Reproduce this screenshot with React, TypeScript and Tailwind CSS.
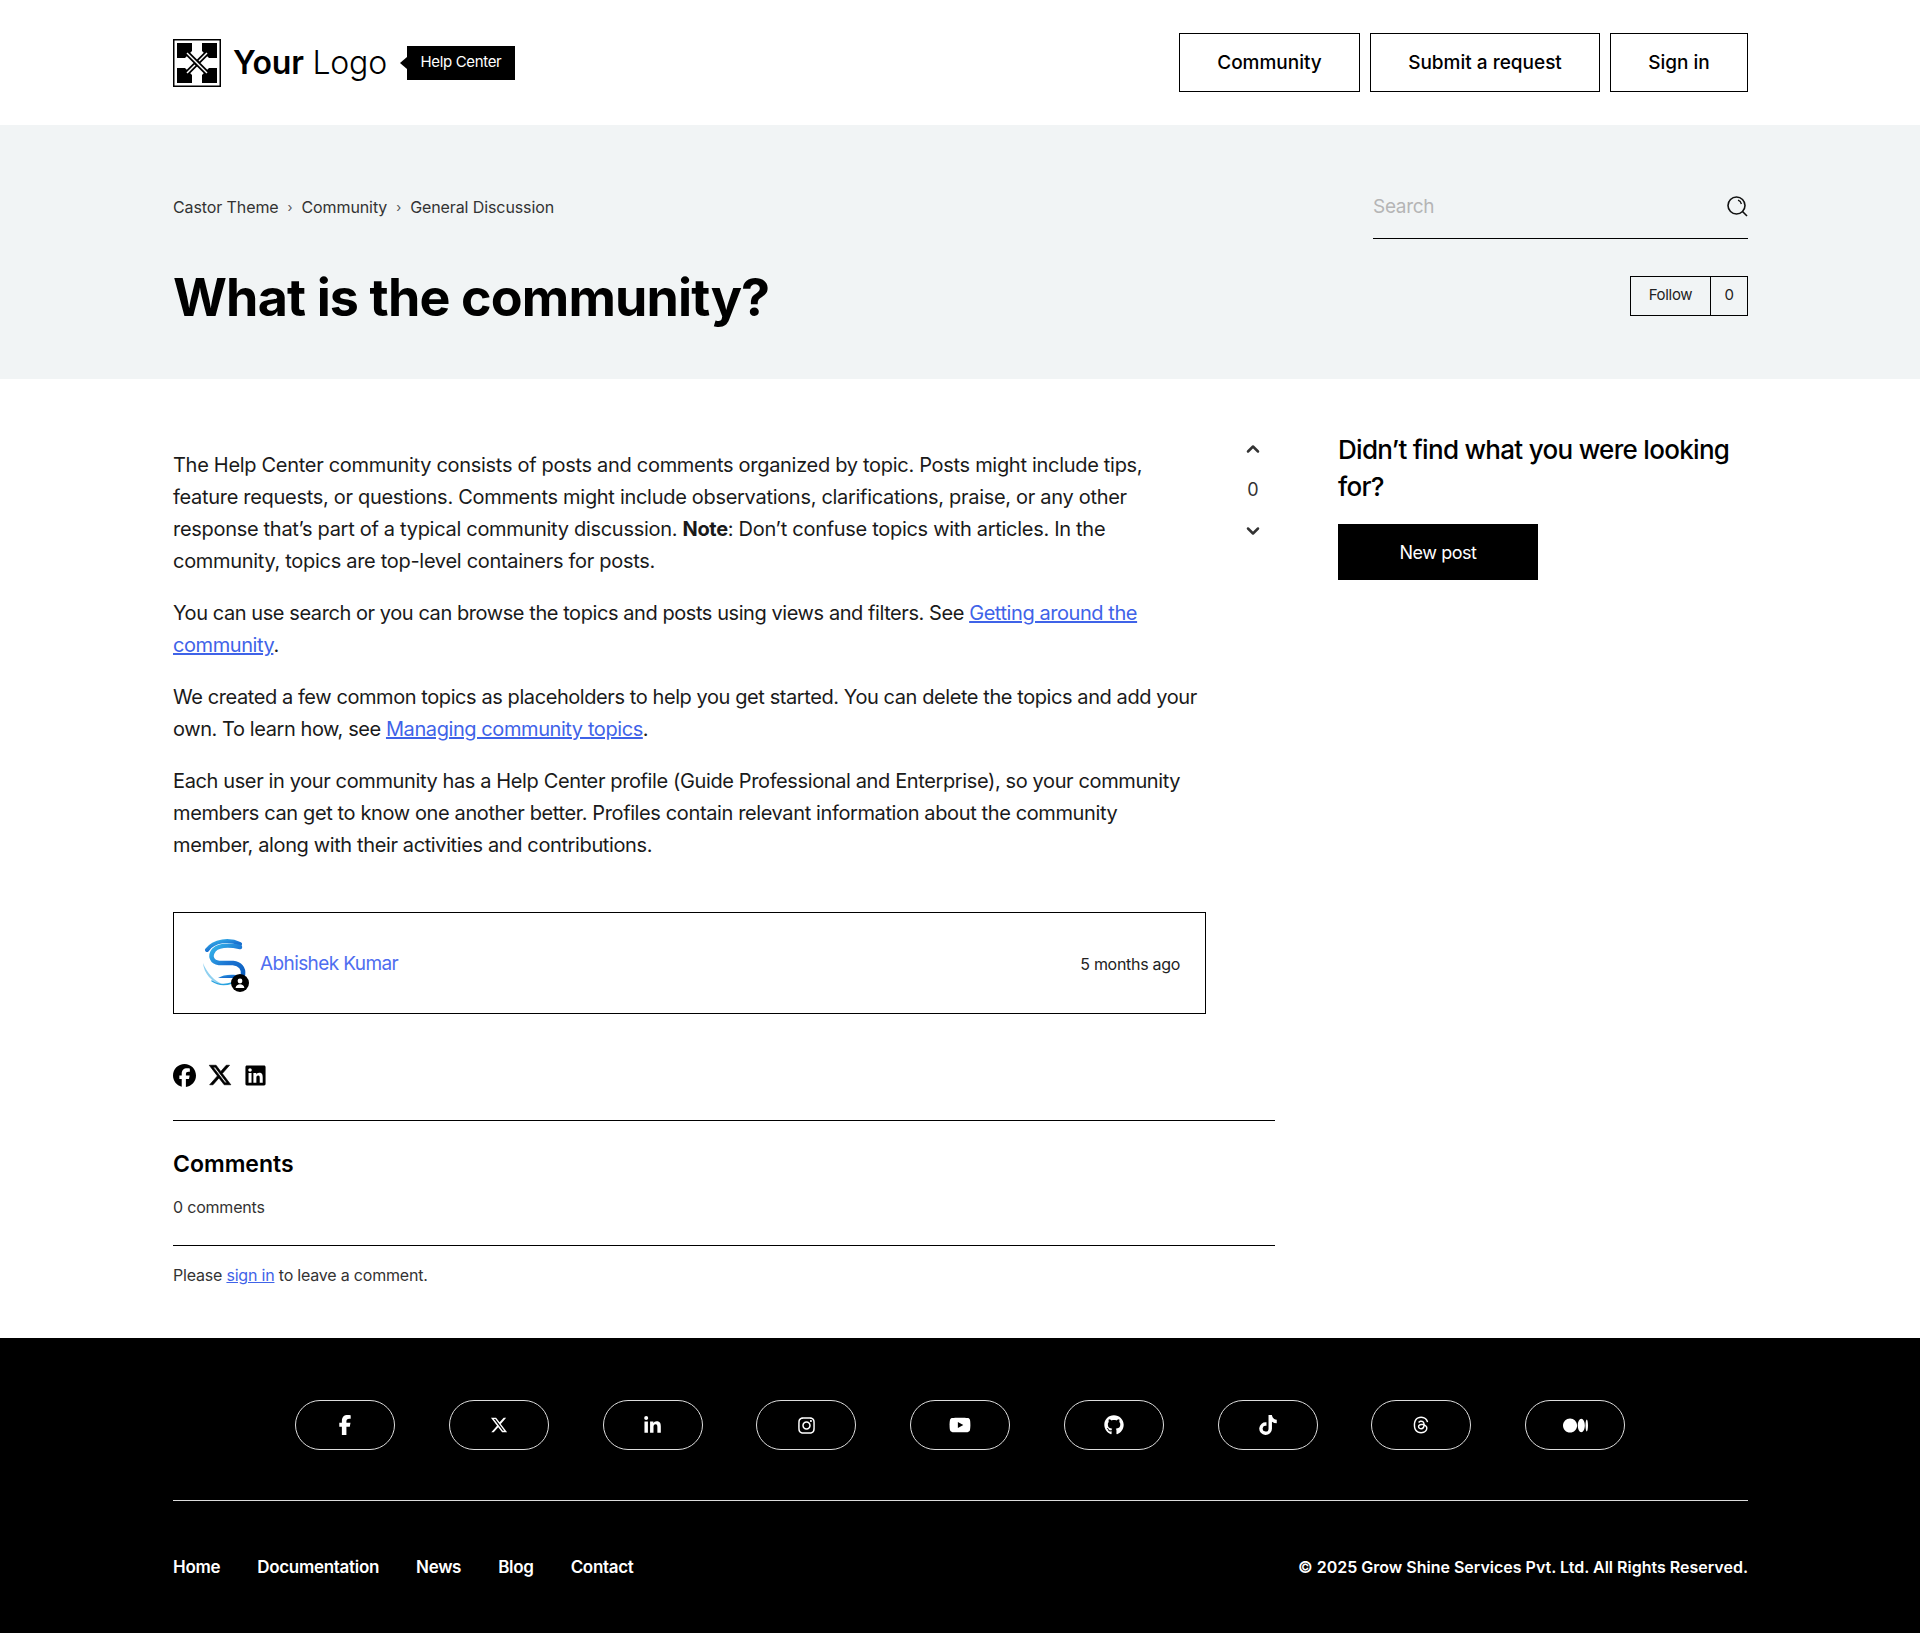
import { ChevronDown, ChevronUp } from "lucide-react";
import {
  FaFacebook,
  FaFacebookF,
  FaGithub,
  FaInstagram,
  FaLinkedin,
  FaLinkedinIn,
  FaMedium,
  FaThreads,
  FaTiktok,
  FaXTwitter,
  FaYoutube,
} from "react-icons/fa6";

const FOOTER_ICONS = [
  { Icon: FaFacebookF, size: 20 },
  { Icon: FaXTwitter, size: 18 },
  { Icon: FaLinkedinIn, size: 19 },
  { Icon: FaInstagram, size: 19 },
  { Icon: FaYoutube, size: 22 },
  { Icon: FaGithub, size: 20 },
  { Icon: FaTiktok, size: 20 },
  { Icon: FaThreads, size: 18 },
  { Icon: FaMedium, size: 25 },
];

const FOOTER_LINKS = ["Home", "Documentation", "News", "Blog", "Contact"];

function LogoMark() {
  return (
    <svg width="48" height="48" viewBox="0 0 48 48" className="shrink-0">
      <rect x="0.75" y="0.75" width="46.500" height="46.500" fill="#fff" stroke="#000" strokeWidth="1.500" />
      <path d="M4 4H19V12L12 19H4Z" fill="#000" />
      <path d="M44 4H29V12L36 19H44Z" fill="#000" />
      <path d="M4 44H19V36L12 29H4Z" fill="#000" />
      <path d="M44 44H29V36L36 29H44Z" fill="#000" />
      <path d="M15 15L33 33M33 15L15 33" stroke="#000" strokeWidth="5" fill="none" />
      <path d="M14 14L34 34" stroke="#fff" strokeWidth="1.500" fill="none" />
      <path d="M34 14L26 22M22 26L14 34" stroke="#fff" strokeWidth="1.500" fill="none" />
    </svg>
  );
}

function SearchGlyph() {
  return (
    <svg width="22" height="22" viewBox="0 0 22 22" fill="none" stroke="#111" strokeWidth="1.600">
      <circle cx="10.500" cy="10.500" r="8.500" />
      <path d="M16.500 16.500L21 21" />
      <path d="M12 5.200c1.800.6 3 2 3.400 3.800" strokeWidth="1.300" />
    </svg>
  );
}

function Avatar() {
  return (
    <div className="relative h-[50px] w-[50px] shrink-0">
      <svg width="50" height="50" viewBox="0 0 50 50" fill="none">
        <defs>
          <linearGradient id="swoosh" x1="0" y1="0" x2="1" y2="1">
            <stop offset="0" stopColor="#35b6ea" />
            <stop offset="0.55" stopColor="#1c74d2" />
            <stop offset="1" stopColor="#0b5fc0" />
          </linearGradient>
        </defs>
        <path d="M40 6C30 1 14 2 7 12" stroke="url(#swoosh)" strokeWidth="4" strokeLinecap="round" />
        <path d="M40 9C30 7 19 7 14 12C9 18 12 24 19 25H33C40 26 44 30 43 37" stroke="url(#swoosh)" strokeWidth="4.500" strokeLinecap="round" />
        <path d="M3 25C4 35 11 45 24 47C14 43 7 35 3 25Z" fill="#8fd0f0" />
        <path d="M18 40C22 37 30 36 36 37V40H18Z" fill="url(#swoosh)" />
        <path d="M12 43C18 47 26 47 32 45" stroke="#2aa3e0" strokeWidth="1.500" strokeLinecap="round" />
      </svg>
      <div className="absolute bottom-[-4px] right-[1px] flex h-[18px] w-[18px] items-center justify-center rounded-full bg-black">
        <svg width="12" height="12" viewBox="0 0 12 12" fill="#fff">
          <circle cx="6" cy="4" r="2.400" />
          <path d="M1.600 11c.4-2.600 2.200-3.800 4.400-3.800s4 1.200 4.400 3.800z" />
        </svg>
      </div>
    </div>
  );
}

export default function App() {
  return (
    <div className="flex min-h-[1633px] flex-col bg-white font-['Inter',sans-serif] text-black">
      <header className="h-[125px]">
        <div className="ml-[173px] flex h-full w-[1575px] items-center justify-between">
          <div className="flex items-center">
            <LogoMark />
            <div className="ml-[12px] text-[32px] leading-none tracking-[-0.2px]">
              <span className="font-semibold">Your</span> <span className="font-light">Logo</span>
            </div>
            <div className="relative ml-[20px] flex h-[34px] w-[108px] items-center justify-center bg-black text-[15px] tracking-[-0.35px] text-white">
              <span className="absolute left-[-7px] top-[11px] h-0 w-0 border-y-[6px] border-r-[7px] border-y-transparent border-r-black" />
              Help Center
            </div>
          </div>
          <nav className="flex gap-[10px] text-[19px] font-medium">
            <a className="flex h-[59px] w-[181px] items-center justify-center border border-black pt-[2px]">Community</a>
            <a className="flex h-[59px] w-[230px] items-center justify-center border border-black pt-[2px]">Submit a request</a>
            <a className="flex h-[59px] w-[138px] items-center justify-center border border-black pt-[2px]">Sign in</a>
          </nav>
        </div>
      </header>

      <section className="h-[254px] bg-[#f1f4f5]">
        <div className="ml-[173px] w-[1575px]">
          <div className="flex items-start justify-between pt-[57px]">
            <ol className="flex items-center pt-[14px] text-[16px] leading-[22px] tracking-[-0.1px] text-[#333]">
              <li>Castor Theme</li>
              <li className="mx-[9px] text-[13px] text-[#555]">›</li>
              <li>Community</li>
              <li className="mx-[9px] text-[13px] text-[#555]">›</li>
              <li>General Discussion</li>
            </ol>
            <div className="flex h-[57px] w-[375px] items-start justify-between border-b border-black pt-[13px]">
              <span className="text-[19px] leading-[24px] tracking-[-0.3px] text-[#b5b5b5]">Search</span>
              <SearchGlyph />
            </div>
          </div>
          <div className="mt-[26px] flex items-center justify-between">
            <h1 className="text-[52px] font-bold leading-[66px] tracking-[-0.85px]">What is the community?</h1>
            <div className="mb-[5px] flex h-[40px] w-[118px] border border-black text-[15px] tracking-[-0.3px] text-[#222]">
              <span className="flex flex-1 items-center justify-center border-r border-black">Follow</span>
              <span className="flex w-[36px] items-center justify-center">0</span>
            </div>
          </div>
        </div>
      </section>

      <main className="ml-[173px] flex w-[1575px] justify-between pt-[52px]">
        <div className="w-[1102px]">
          <div className="flex justify-between">
            <article className="w-[1033px] pt-[18px] text-[20px] leading-[32px] text-[#1a1a1a]">
              <p className="tracking-[-0.3px]">
                The Help Center community consists of posts and comments organized by topic. Posts might include tips,
                <br />
                feature requests, or questions. Comments might include observations, clarifications, praise, or any other
                <br />
                response that’s part of a typical community discussion. <strong>Note</strong>: Don’t confuse topics with
                articles. In the
                <br />
                community, topics are top-level containers for posts.
              </p>
              <p className="mt-[20px] tracking-[-0.43px]">
                You can use search or you can browse the topics and posts using views and filters. See{" "}
                <a className="text-[#3f63e8] underline">Getting around the</a>
                <br />
                <a className="text-[#3f63e8] underline">community</a>.
              </p>
              <p className="mt-[20px] tracking-[-0.42px]">
                We created a few common topics as placeholders to help you get started. You can delete the topics and add
                your
                <br />
                own. To learn how, see <a className="text-[#3f63e8] underline">Managing community topics</a>.
              </p>
              <p className="mt-[20px] tracking-[-0.38px]">
                Each user in your community has a Help Center profile (Guide Professional and Enterprise), so your community
                <br />
                members can get to know one another better. Profiles contain relevant information about the community
                <br />
                member, along with their activities and contributions.
              </p>
            </article>
            <div className="mr-[7px] flex h-[110px] w-[30px] flex-col items-center justify-between pt-[8px] text-[#333]">
              <ChevronUp size={20} strokeWidth={3} />
              <span className="text-[18px] leading-none">0</span>
              <ChevronDown size={20} strokeWidth={3} />
            </div>
          </div>

          <div className="mt-[51px] flex h-[102px] w-[1033px] items-center justify-between border border-black pl-[26px] pr-[25px]">
            <div className="flex items-center gap-[10px]">
              <Avatar />
              <span className="pt-[2px] text-[19px] tracking-[-0.6px] text-[#4f6ef0]">Abhishek Kumar</span>
            </div>
            <span className="pt-[2px] text-[16px] tracking-[-0.3px] text-[#222]">5 months ago</span>
          </div>

          <div className="mt-[49px] flex items-center gap-[12px]">
            <FaFacebook size={23} />
            <FaXTwitter size={24} stroke="currentColor" strokeWidth={14} />
            <FaLinkedin size={23} />
          </div>

          <div className="mt-[33px] border-t border-black pt-[27px]">
            <h2 className="text-[23px] font-semibold leading-[32px]">Comments</h2>
            <p className="mt-[15px] text-[16px] leading-[24px] tracking-[-0.2px] text-[#333]">0 comments</p>
          </div>
          <div className="mt-[26px] border-t border-black pt-[17px] text-[16px] leading-[24px] tracking-[-0.2px] text-[#333]">
            Please <a className="text-[#3f63e8] underline">sign in</a> to leave a comment.
          </div>
        </div>

        <aside className="w-[410px]">
          <h3 className="text-[26px] font-medium leading-[37px] tracking-[-0.7px]">
            Didn’t find what you were looking for?
          </h3>
          <button className="mt-[19px] flex h-[56px] w-[200px] items-center justify-center bg-black text-[18px] tracking-[-0.45px] text-white">
            New post
          </button>
        </aside>
      </main>

      <footer className="mt-auto h-[295px] bg-black text-white">
        <div className="ml-[173px] w-[1575px]">
          <div className="flex justify-between pl-[122px] pr-[123px] pt-[62px]">
            {FOOTER_ICONS.map(({ Icon, size }, i) => (
              <a key={i} className="flex h-[50px] w-[100px] items-center justify-center rounded-[25px] border border-[#ddd]">
                <Icon size={size} />
              </a>
            ))}
          </div>
          <div className="mt-[50px] flex items-center justify-between border-t border-[#ddd] pt-[54px] font-semibold leading-[24px]">
            <div className="flex gap-[37px] text-[17px] tracking-[-0.3px]">
              {FOOTER_LINKS.map((link) => (
                <a key={link}>{link}</a>
              ))}
            </div>
            <span className="text-[16px]">© 2025 Grow Shine Services Pvt. Ltd. All Rights Reserved.</span>
          </div>
        </div>
      </footer>
    </div>
  );
}
